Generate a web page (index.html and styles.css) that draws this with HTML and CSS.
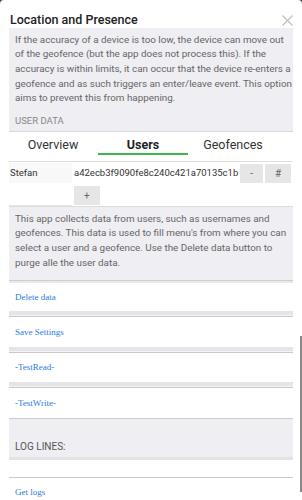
FILE: index.html
```html
<!DOCTYPE html>
<html>
<head>
<meta charset="utf-8">
<link rel="stylesheet" href="styles.css">
</head>
<body>
<div class="dialog">
  <div class="head">
    <span class="title">Location and Presence</span>
    <svg class="close" viewBox="0 0 11 11"><path d="M0.5 0.5L10.5 10.5M10.5 0.5L0.5 10.5" stroke="#bdbdbd" stroke-width="1.1" fill="none"/></svg>
  </div>
  <div class="info">
    <p>If the accuracy of a device is too low, the device can move out of the geofence (but the app does not process this). If the accuracy is within limits, it can occur that the device re-enters a geofence and as such triggers an enter/leave event. This option aims to prevent this from happening.</p>
    <div class="label">USER DATA</div>
  </div>
  <div class="tabs">
    <div class="tab">Overview</div>
    <div class="tab active">Users</div>
    <div class="tab">Geofences</div>
  </div>
  <div class="users">
    <div class="row row1">
      <div class="name">Stefan</div>
      <div class="hash">a42ecb3f9090fe8c240c421a70135c1b</div>
      <button class="btn">-</button>
      <button class="btn">#</button>
    </div>
    <div class="row row2">
      <div class="name empty"></div>
      <button class="btn">+</button>
    </div>
  </div>
  <div class="info info2">
    <p>This app collects data from users, such as usernames and geofences. This data is used to fill menu's from where you can select a user and a geofence. Use the Delete data button to purge alle the user data.</p>
  </div>
  <a class="link first">Delete data</a>
  <div class="sep"></div>
  <a class="link">Save Settings</a>
  <div class="sep"></div>
  <a class="link short">-TestRead-</a>
  <div class="sep"></div>
  <a class="link">-TestWrite-</a>
  <div class="log">LOG LINES:</div>
  <div class="logbody"></div>
  <a class="link getlogs">Get logs</a>
  <div class="scroll"></div>
</div>
</body>
</html>
```
FILE: styles.css
```css
body {
  margin: 0;
  background: #444;
  font-family: Roboto, "Liberation Sans", sans-serif;
}
.dialog {
  position: relative;
  width: 302px;
  height: 500px;
  background: #fff;
  border-radius: 4px 4px 0 0;
  overflow: hidden;
}
.head {
  display: flex;
  justify-content: space-between;
  align-items: center;
  height: 16px;
  padding: 12px 9px 0 10px;
}
.title {
  font-size: 12.5px;
  font-weight: 500;
  line-height: 16px;
  color: #222;
}
.close {
  width: 11px;
  height: 11px;
}
.info {
  margin: 0 9px;
  background: #eeeef3;
  padding: 4.5px 1px 4px 6px;
  border-bottom: 1px solid #d9d9dd;
}
.info p {
  margin: 0;
  font-size: 9.85px;
  line-height: 14.7px;
  color: #666;
}
.label {
  margin-top: 9px;
  font-size: 9.5px;
  line-height: 12px;
  color: #888;
}
.tabs {
  display: flex;
  margin: 0 9px;
  padding: 4px 0 6px;
  border-bottom: 1px solid #dedede;
}
.tab {
  width: 90px;
  text-align: center;
  font-size: 12.5px;
  line-height: 17px;
  color: #333;
  border-bottom: 2px solid transparent;
}
.tab:first-child {
  margin-left: -1px;
}
.tab.active {
  font-weight: 700;
  color: #222;
  border-bottom-color: #3cb64a;
}
.users {
  margin: 0 9px;
}
.row {
  display: flex;
  gap: 2px;
}
.row1 {
  align-items: center;
  padding: 1px 0 2px;
}
.row2 {
  height: 21px;
  align-items: center;
}
.name {
  width: 63px;
  height: 20px;
  line-height: 20px;
  font-size: 9.5px;
  color: #333;
  background: #f8f8f8;
  padding-left: 1px;
  box-sizing: border-box;
}
.name.empty {
  align-self: stretch;
  height: auto;
  background: #fff;
  border-bottom: 1px solid #e6e6e6;
}
.hash {
  font-size: 9.5px;
  color: #333;
  line-height: 20px;
}
.btn {
  height: 19px;
  padding: 0 10px;
  border: none;
  border-radius: 0;
  background: #e6e6e6;
  font-family: Roboto, sans-serif;
  font-size: 10px;
  color: #666;
  line-height: 19px;
}
.info2 {
  border-top: 1px solid #dcdcdc;
  padding: 4.5px 6px 9.7px;
  border-bottom: 1px solid #cdcdd1;
  box-shadow: 0 2px 0 #e9e9ed;
}
.link {
  display: block;
  margin: 0 9px;
  padding-left: 6px;
  height: 30px;
  line-height: 30px;
  font-family: "Liberation Serif", serif;
  font-size: 9px;
  color: #1f7ce6;
  text-decoration: none;
}
.link.first {
  margin-top: 2px;
  height: 28px;
  line-height: 28px;
}
.link.short {
  height: 29px;
  line-height: 29px;
}
.sep {
  margin: 0 9px;
  height: 6px;
  background: linear-gradient(#e5e5e9 0 4px, #f3f3f5 4px 5px, #c9c9cc 5px 6px);
}
.log {
  margin: 0 9px;
  border-top: 1px solid #cccccc;
  border-bottom: 3px solid #e4e4e8;
  background: #eeeef3;
  padding: 22px 6px 4px;
  font-size: 10px;
  line-height: 12px;
  color: #555;
}
.logbody {
  height: 17px;
}
.link.getlogs {
  border-top: 1px solid #cccccc;
  height: 28px;
  line-height: 28px;
}
.scroll {
  position: absolute;
  right: 0;
  top: 336px;
  width: 2px;
  height: 156px;
  background: #888;
}
```
